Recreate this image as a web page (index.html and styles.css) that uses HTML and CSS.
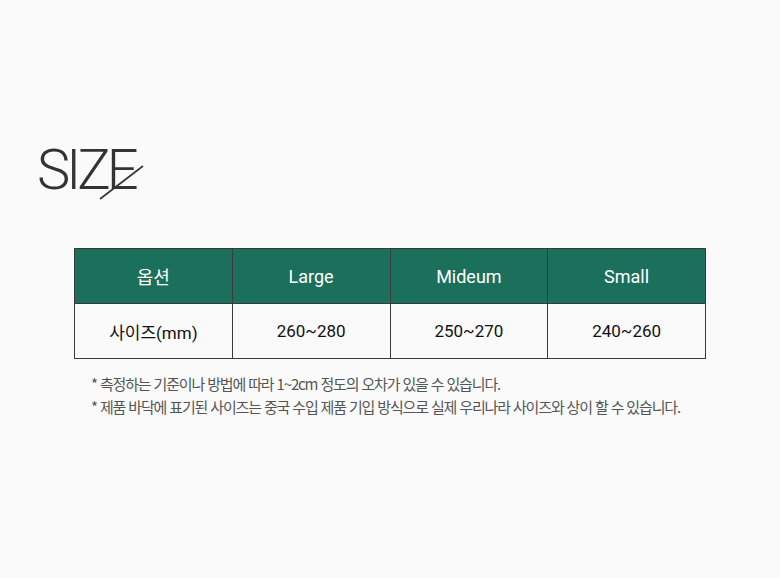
FILE: index.html
```html
<!DOCTYPE html>
<html lang="ko">
<head>
<meta charset="utf-8">
<link rel="stylesheet" href="styles.css">
</head>
<body>
<div class="page">
  <div class="title">
    <span class="title-text">SIZE</span>
    <svg class="slash" width="50" height="40" viewBox="0 0 50 40"><line x1="2" y1="37" x2="45" y2="4" stroke="#333" stroke-width="1.6"/></svg>
  </div>
  <table class="size-table">
    <thead>
      <tr><th>옵션</th><th>Large</th><th>Mideum</th><th>Small</th></tr>
    </thead>
    <tbody>
      <tr><td>사이즈(mm)</td><td>260~280</td><td>250~270</td><td>240~260</td></tr>
    </tbody>
  </table>
  <div class="notes">
    <p>* 측정하는 기준이나 방법에 따라 1~2cm 정도의 오차가 있을 수 있습니다.</p>
    <p>* 제품 바닥에 표기된 사이즈는 중국 수입 제품 기입 방식으로 실제 우리나라 사이즈와 상이 할 수 있습니다.</p>
  </div>
</div>
</body>
</html>
```
FILE: styles.css
```css
html, body { margin: 0; padding: 0; }
body {
  background: #fafafa;
  width: 780px;
  height: 578px;
  overflow: hidden;
  font-family: Roboto, "Noto Sans", "Noto Sans CJK KR", sans-serif;
}
.page {
  padding: 132px 0 0 74px;
}
.title {
  position: relative;
  height: 116px;
}
.title-text {
  display: block;
  margin-left: -37px;
  font-family: Roboto, sans-serif;
  font-weight: 300;
  font-size: 56px;
  letter-spacing: -4px;
  color: #333;
  line-height: 76px;
}
.slash {
  position: absolute;
  left: 24px;
  top: 30px;
}
.size-table {
  border-collapse: collapse;
  width: 632px;
  table-layout: fixed;
}
.size-table th, .size-table td {
  border: 1.5px solid #3a3a3a;
  text-align: center;
  height: 54px;
  padding: 0;
}
.size-table th {
  background: #1b705c;
  color: #fff;
  font-weight: 400;
  font-size: 18px;
}
.size-table td {
  background: #fafafa;
  color: #111;
  font-size: 17px;
}
.notes {
  margin-top: 13px;
  padding-left: 17px;
  color: #555;
  font-size: 15px;
  font-family: "Noto Sans CJK KR", sans-serif;
  letter-spacing: -1.15px;
}
.notes p { margin: 0; line-height: 23px; }
```
